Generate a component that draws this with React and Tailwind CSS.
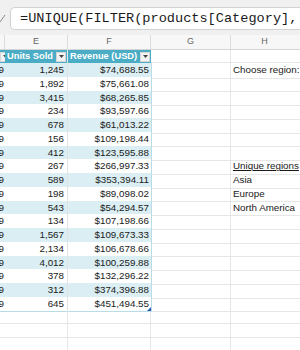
import React from "react";

const rows = [
  ["1,245", "$74,688.55"],
  ["1,892", "$75,661.08"],
  ["3,415", "$68,265.85"],
  ["234", "$93,597.66"],
  ["678", "$61,013.22"],
  ["156", "$109,198.44"],
  ["412", "$123,595.88"],
  ["267", "$266,997.33"],
  ["589", "$353,394.11"],
  ["198", "$89,098.02"],
  ["543", "$54,294.57"],
  ["134", "$107,198.66"],
  ["1,567", "$109,673.33"],
  ["2,134", "$106,678.66"],
  ["4,012", "$100,259.88"],
  ["378", "$132,296.22"],
  ["312", "$374,396.88"],
  ["645", "$451,494.55"],
];

// text in column H, by row index
const side = {
  0: { text: "Choose region:" },
  7: { text: "Unique regions", underline: true },
  8: { text: "Asia" },
  9: { text: "Europe" },
  10: { text: "North America" },
};

const grid = "grid grid-cols-[5px_63px_83px_80px_1fr]";

function Dropdown() {
  return (
    <span className="flex h-[10px] w-[10px] shrink-0 items-center justify-center border border-[#d6d6d6] bg-[#f3f3f3]">
      <svg width="5" height="3" viewBox="0 0 5 3">
        <path d="M0 0 L5 0 L2.5 3 Z" fill="#444" />
      </svg>
    </span>
  );
}

export default function App() {
  return (
    <div
      className="h-[350px] w-[300px] overflow-hidden bg-white text-[9.8px] text-[#1a1a1a]"
      style={{ fontFamily: '"Liberation Sans", Arial, sans-serif' }}
    >
      {/* formula bar */}
      <div className="flex h-[35px] items-start bg-[#f0f0f0] pt-[7px]">
        <div className="flex h-[23px] w-[10px] items-center">
          <svg width="6" height="10" viewBox="0 0 6 10">
            <path d="M-3 5 L0 8 L5 1" stroke="#8a8a8a" strokeWidth="1" fill="none" />
          </svg>
        </div>
        <div className="flex h-[23px] flex-1 items-center rounded-l-[5px] border border-r-0 border-[#d2d2d2] bg-white pl-[9px] pt-[2px]">
          <span
            className="whitespace-nowrap text-[13.6px] text-[#1a1a1a]"
            style={{ fontFamily: '"Liberation Mono", "DejaVu Sans Mono", monospace' }}
          >
            =UNIQUE(FILTER(products[Category],
          </span>
        </div>
      </div>

      {/* column letters */}
      <div className={`${grid} h-[15px] border-b border-[#d4d4d4] bg-[#f7f7f7] text-[9px] text-[#666]`}>
        <div className="border-r border-[#dcdcdc]" />
        <div className="flex items-center justify-center border-r border-[#dcdcdc]">E</div>
        <div className="flex items-center justify-center border-r border-[#dcdcdc]">F</div>
        <div className="flex items-center justify-center border-r border-[#dcdcdc]">G</div>
        <div className="flex items-center justify-center pr-[2px]">H</div>
      </div>

      {/* table header */}
      <div className={`${grid} h-[13px] text-[9.3px]`}>
        <div className="flex items-center justify-end overflow-hidden bg-[#4bacc6]">
          <div className="-mr-[5px]">
            <Dropdown />
          </div>
        </div>
        <div className="flex items-center justify-between overflow-hidden border-r border-[#e6e6e6] bg-[#4bacc6] pl-[2px] pr-[1px] font-bold text-white">
          <span className="whitespace-nowrap">Units Sold</span>
          <Dropdown />
        </div>
        <div className="flex items-center justify-between overflow-hidden bg-[#4bacc6] pl-[2px] pr-[1px] font-bold text-white">
          <span className="whitespace-nowrap">Revenue (USD)</span>
          <Dropdown />
        </div>
        <div className="border-b border-r border-[#e6e6e6]" />
        <div className="border-b border-[#e6e6e6]" />
      </div>

      {/* data rows */}
      {rows.map(([units, revenue], i) => {
        const band = i % 2 === 0 ? "bg-[#daeef3]" : "bg-white";
        const s = side[i];
        return (
          <div key={i} className={`${grid} h-[13.75px]`}>
            <div className={`flex items-center justify-end overflow-hidden border-b border-[#b9dde7] pr-[1px] ${band}`}>
              9
            </div>
            <div className={`flex items-center justify-end border-b border-r border-b-[#b9dde7] border-r-[#e2e2e2] pr-[3px] ${band}`}>
              {units}
            </div>
            <div className={`relative flex items-center justify-end border-b border-[#b9dde7] pr-[2px] ${band}`}>
              <span className="whitespace-nowrap">{revenue}</span>
              {i === rows.length - 1 && (
                <svg className="absolute bottom-0 right-0" width="4" height="4" viewBox="0 0 4 4">
                  <path d="M4 0 L4 4 L0 4 Z" fill="#2b5cb0" />
                </svg>
              )}
            </div>
            <div className="border-b border-l border-r border-b-[#e6e6e6] border-l-[#b9dde7] border-r-[#e6e6e6]" />
            <div className="flex items-center overflow-hidden whitespace-nowrap border-b border-[#e6e6e6] pl-[2px]">
              {s && <span className={s.underline ? "underline" : ""}>{s.text}</span>}
            </div>
          </div>
        );
      })}

      {/* empty rows below */}
      {[0, 1, 2, 3].map((i) => (
        <div key={i} className={`${grid} h-[13.75px]`}>
          <div className="border-b border-[#e6e6e6]" />
          <div className="border-b border-r border-[#e6e6e6]" />
          <div className="border-b border-r border-[#e6e6e6]" />
          <div className="border-b border-r border-[#e6e6e6]" />
          <div className="border-b border-[#e6e6e6]" />
        </div>
      ))}
    </div>
  );
}
